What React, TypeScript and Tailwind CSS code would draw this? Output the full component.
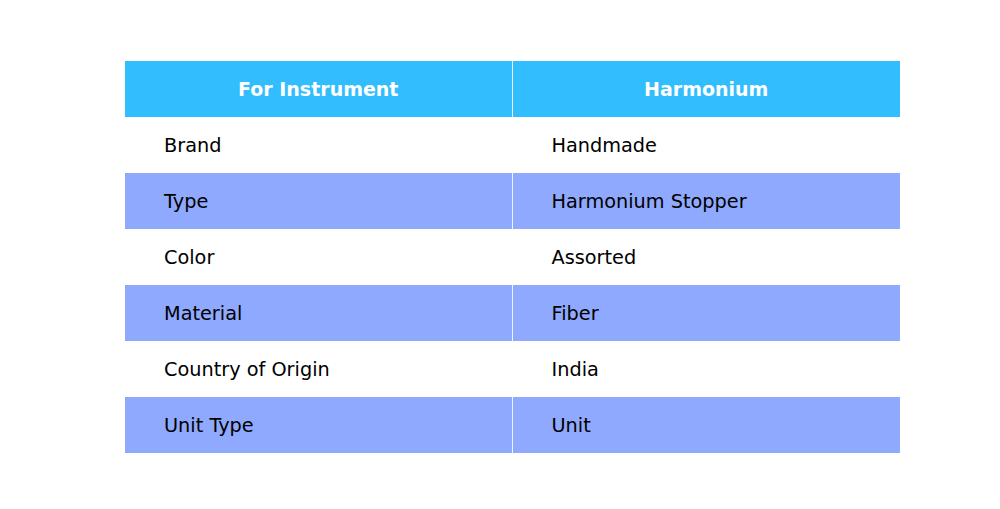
import React from 'react';

const ROWS: [string, string][] = [
  ['Brand', 'Handmade'],
  ['Type', 'Harmonium Stopper'],
  ['Color', 'Assorted'],
  ['Material', 'Fiber'],
  ['Country of Origin', 'India'],
  ['Unit Type', 'Unit'],
];

export default function App() {
  return (
    <div className="w-[1000px] h-[509px] bg-white pt-[61px] pl-[125px] font-['DejaVu_Sans',sans-serif]">
      <div className="w-[775px]">
        {/* Header */}
        <div className="grid grid-cols-2 h-[56px] bg-[#31bdfe] text-white font-bold text-[19px]">
          <div className="flex items-center justify-center border-r border-[#e6f6ff]">For Instrument</div>
          <div className="flex items-center justify-center">Harmonium</div>
        </div>

        {ROWS.map(([label, value], i) => {
          const shaded = i % 2 === 1;
          return (
            <div
              key={label}
              className={`grid grid-cols-2 h-[56px] text-[19.3px] text-black ${shaded ? 'bg-[#8fa9fe]' : 'bg-white'}`}
            >
              <div className={`flex items-center pl-[39px] pt-[2px] border-r ${shaded ? 'border-[#eef1ff]' : 'border-white'}`}>
                {label}
              </div>
              <div className="flex items-center pl-[39px] pt-[2px]">{value}</div>
            </div>
          );
        })}
      </div>
    </div>
  );
}
